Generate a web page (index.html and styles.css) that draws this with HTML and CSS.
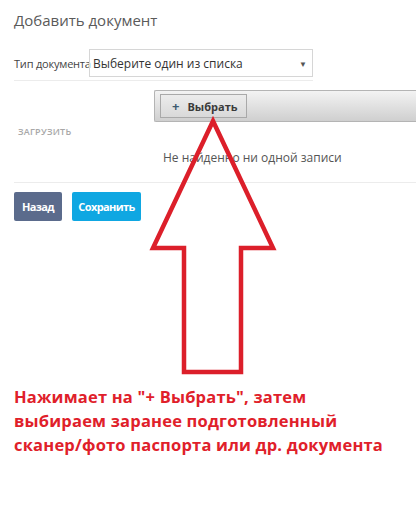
FILE: index.html
```html
<!DOCTYPE html>
<html lang="ru">
<head>
<meta charset="utf-8">
<link rel="stylesheet" href="styles.css">
</head>
<body>
<div class="page">
  <h1 class="title">Добавить документ</h1>
  <div class="form-row">
    <span class="label">Тип документа</span>
    <div class="select">
      <span>Выберите один из списка</span>
      <span class="caret">&#9660;</span>
    </div>
  </div>
  <div class="upload">
    <div class="upload-label">ЗАГРУЗИТЬ</div>
    <div class="upload-body">
      <div class="toolbar">
        <div class="pick"><span class="plus">+</span><span>Выбрать</span></div>
      </div>
      <div class="empty">Не найденно ни одной записи</div>
    </div>
  </div>
  <div class="actions">
    <button class="btn back">Назад</button>
    <button class="btn save">Сохранить</button>
  </div>
  <p class="note">Нажимает на "+ Выбрать", затем<br>выбираем заранее подготовленный<br>сканер/фото паспорта или др. документа</p>
  <svg class="arrow" width="416" height="400" viewBox="0 0 416 400">
    <polygon points="213,121 273,248 241,248 241,372 184,372 184,248 153,248" fill="none" stroke="#dc1f2a" stroke-width="4.5" stroke-linejoin="miter"/>
  </svg>
</div>
</body>
</html>
```
FILE: styles.css
```css
html, body { margin: 0; padding: 0; background: #fff; }
body { font-family: "Open Sans", "Noto Sans", sans-serif; color: #444; }
.page { position: relative; width: 416px; height: 514px; overflow: hidden; }
.title { margin: 0; padding: 9px 0 0 14px; font-size: 15px; font-weight: 400; color: #5a5a5a; line-height: 22px; }
.form-row { display: flex; align-items: center; margin: 18px 0 0 14px; width: 299px; padding-bottom: 3px; border-bottom: 1px solid #ececec; }
.label { font-size: 11px; color: #444; width: 75px; white-space: nowrap; letter-spacing: -0.2px; }
.select { flex: 1; height: 26px; border: 1px solid #d6d6d6; display: flex; align-items: center; justify-content: space-between; padding: 0 5px 0 3px; font-size: 12px; color: #333; }
.caret { font-size: 8px; color: #555; }
.upload { display: flex; margin-left: 14px; border-bottom: 1px solid #ececec; height: 101px; }
.upload-label { width: 136px; padding: 44px 0 0 4px; font-size: 9px; color: #a8a8a8; font-weight: 600; letter-spacing: 0.25px; }
.upload-body { flex: 1; padding-top: 9px; }
.toolbar { height: 30px; border: 1px solid #b4b4b4; border-right: none; border-radius: 2px 0 0 2px; background: linear-gradient(#f3f3f3, #cfcfcf); display: flex; align-items: center; padding-left: 5px; }
.pick { width: 87px; height: 24px; border: 1px solid #a9a9a9; box-sizing: border-box; display: flex; align-items: center; padding-left: 11px; font-size: 11px; font-weight: 700; color: #3a3a3a; background: linear-gradient(#ececec, #d9d9d9); }
.plus { color: #3d5a70; font-size: 13px; margin-right: 8px; font-weight: 700; }
.empty { margin-top: 27px; padding-left: 9px; font-size: 12px; color: #555; }
.actions { display: flex; gap: 10px; margin: 9px 0 0 14px; }
.btn { border: none; border-radius: 2px; height: 29px; color: #fff; font-family: "Open Sans", sans-serif; font-size: 11px; font-weight: 700; letter-spacing: -0.6px; padding: 0; }
.back { width: 48px; background: #5b6b8c; }
.save { width: 69px; background: #0fa7e2; }
.note { margin: 0; position: absolute; left: 14px; top: 385px; width: 400px; font-family: "Open Sans", sans-serif; font-size: 16.5px; font-weight: 700; line-height: 24px; color: #e0202a; letter-spacing: 0.2px; white-space: nowrap; }
.arrow { position: absolute; left: 0; top: 0; pointer-events: none; }
```
